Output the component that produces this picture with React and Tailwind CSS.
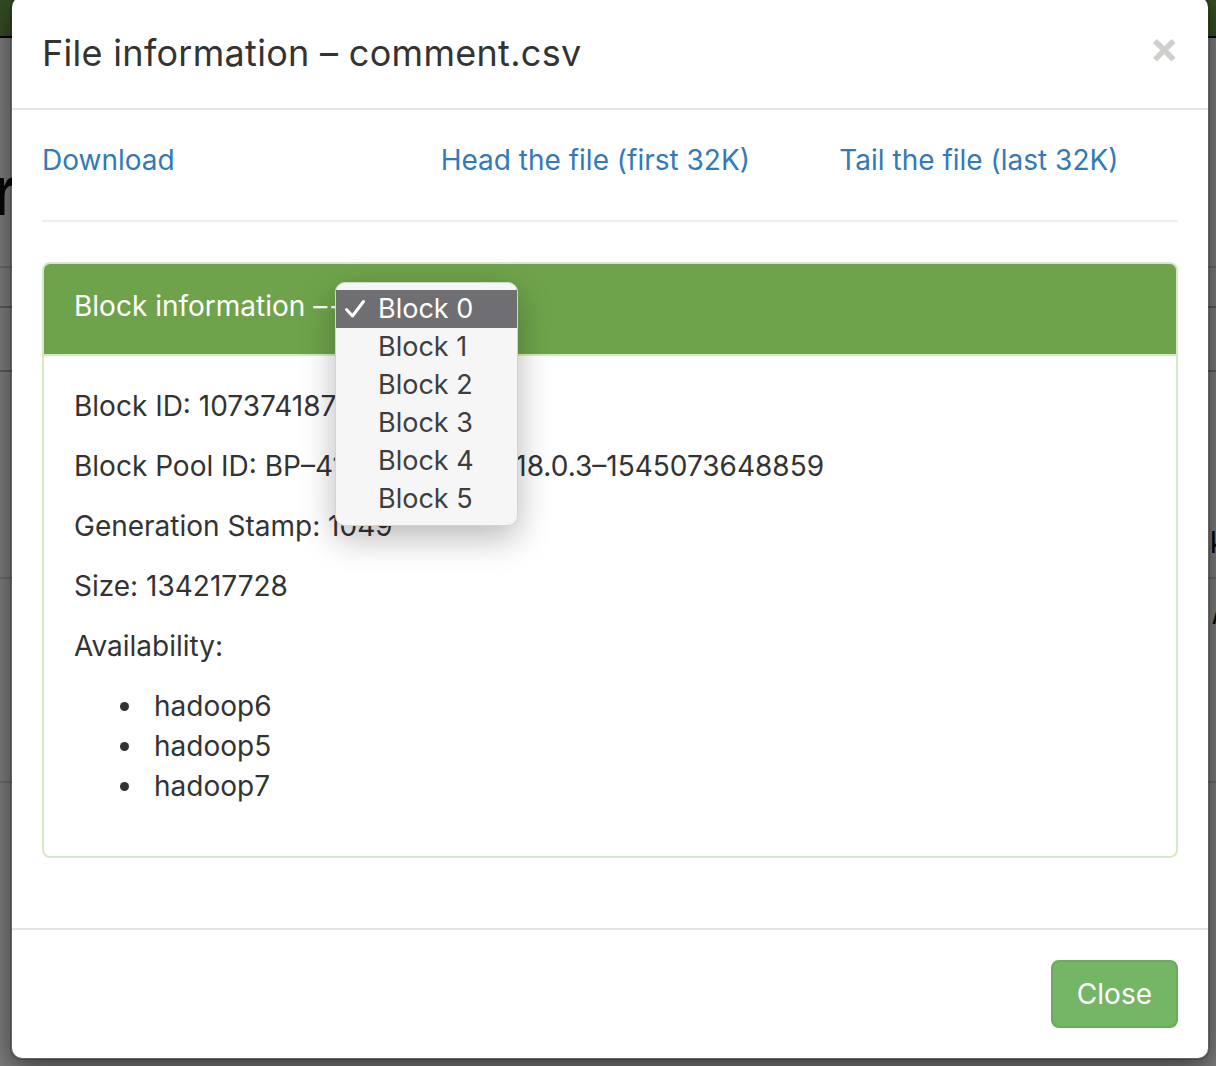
import { useState } from 'react'

const blocks = ['Block 0', 'Block 1', 'Block 2', 'Block 3', 'Block 4', 'Block 5']
const hosts = ['hadoop6', 'hadoop5', 'hadoop7']

// page behind the backdrop, only a sliver of it shows at the edges
function BackgroundPage() {
  return (
    <div className="w-full font-['Liberation_Sans',sans-serif] text-[#111]">
      <div className="h-[38px] bg-[#6b9a47] border-b-2 border-black" />
      <div className="h-[230px] border-b-2 border-[#d8d8d8] pt-[118px]">
        <div className="ml-[-10px] text-[70px] font-bold leading-none">r</div>
      </div>
      <div className="h-[40px] border-b-2 border-[#b8b8b8]" />
      <div className="h-[64px] border-b-2 border-[#b8b8b8]" />
      <div className="flex h-[207px] justify-end border-b-2 border-[#d8d8d8] pt-[156px]">
        <span className="mr-[-9px] text-[30px] leading-none">k</span>
      </div>
      <div className="flex h-[204px] justify-end border-b-2 border-[#d8d8d8] pt-[16px]">
        <span className="mr-[-6px] text-[34px] leading-none">/</span>
      </div>
    </div>
  )
}

function BlockSelect({ selected }) {
  return (
    <div className="absolute left-[291px] top-[18px] w-[183px] rounded-[10px] border border-[#d4d4d4] bg-[#f6f6f6] py-[7px] shadow-[0_12px_34px_rgba(0,0,0,0.28)]">
      {blocks.map((b, i) => (
        <div
          key={b}
          className={
            'flex h-[38px] items-center text-[27px] ' +
            (i === selected ? 'bg-[#6e6e73] text-white' : 'text-[#3e3e3e]')
          }
        >
          <div className="w-[42px] pl-[8px]">
            {i === selected && (
              <svg width="22" height="20" viewBox="0 0 22 20" fill="none" className="block">
                <path d="M2.5 10.5 L8.5 17 L19.5 2.5" stroke="white" strokeWidth="3" strokeLinecap="round" strokeLinejoin="round" />
              </svg>
            )}
          </div>
          <span>{b}</span>
        </div>
      ))}
    </div>
  )
}

export default function App() {
  const [selected] = useState(0)

  return (
    <div className="relative h-[1066px] w-[1216px] overflow-hidden bg-white font-[Inter,'Liberation_Sans',sans-serif]">
      <BackgroundPage />
      <div className="absolute inset-0 bg-black/50" />

      <div className="absolute inset-0 px-[10px]">
        <div className="mt-[-5px] w-[1200px] rounded-[12px] border-2 border-black/20 bg-white bg-clip-padding shadow-[0_10px_30px_rgba(0,0,0,0.5)]">
          {/* header */}
          <div className="flex h-[113px] items-center justify-between border-b-2 border-[#e5e5e5] px-[30px]">
            <h4 className="mt-[2px] text-[36px] leading-[51px] tracking-[0.3px] text-[#333]">File information – comment.csv</h4>
            <button className="mt-[-12px] mr-[-1px] text-[44px] font-bold leading-none text-black/20">×</button>
          </div>

          {/* body */}
          <div className="p-[30px]">
            <div className="grid grid-cols-3 gap-x-[60px] text-[28px] leading-[40px] text-[#337ab7]">
              <a>Download</a>
              <a>Head the file (first 32K)</a>
              <a>Tail the file (last 32K)</a>
            </div>
            <hr className="my-[40px] border-t-2 border-[#eee]" />

            <div className="mb-[40px] rounded-[8px] border-2 border-[#d6e9c6] text-[28px] text-[#333]">
              <div className="relative flex h-[92px] items-center rounded-t-[6px] border-b-2 border-[#d6e9c6] bg-[#6ea34b] px-[30px] text-white">
                <span className="mt-[-6px]">
                  Block information <span className="tracking-[4px]">––</span>
                </span>
                <BlockSelect selected={selected} />
              </div>
              <div className="p-[30px] leading-[40px]">
                <p className="mb-[20px]">Block ID: 1073741874</p>
                <p className="mb-[20px]">Block Pool ID: BP–411958271–172.18.0.3–1545073648859</p>
                <p className="mb-[20px]">Generation Stamp: 1049</p>
                <p className="mb-[20px]">Size: 134217728</p>
                <p className="mb-[20px]">Availability:</p>
                <ul className="mb-[20px] pl-[80px]">
                  {hosts.map((h) => (
                    <li key={h} className="flex items-center">
                      <span className="ml-[-34px] mr-[25px] h-[9px] w-[9px] rounded-full bg-[#333]" />
                      {h}
                    </li>
                  ))}
                </ul>
              </div>
            </div>
          </div>

          {/* footer */}
          <div className="flex justify-end border-t-2 border-[#e5e5e5] p-[30px]">
            <button className="h-[68px] rounded-[8px] border-2 border-[#69aa5c] bg-[#74b566] px-[24px] text-[28px] text-white">
              Close
            </button>
          </div>
        </div>
      </div>
    </div>
  )
}
